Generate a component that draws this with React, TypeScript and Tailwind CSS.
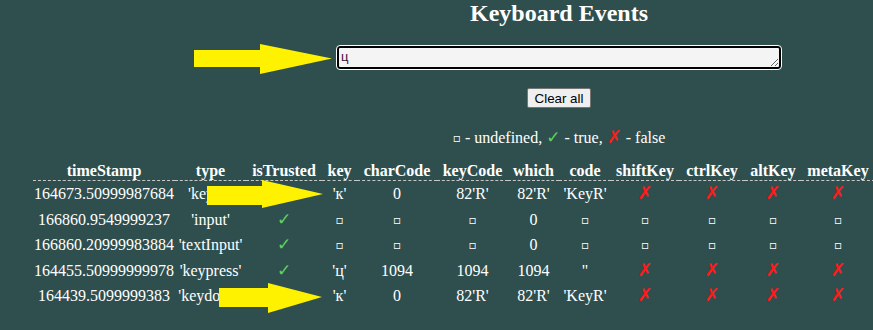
import React from 'react'

const U = () => <span className="font-['DejaVu_Sans'] text-[12px] leading-[10px] align-[1px]">▫</span>
const T = () => <span className="font-['DejaVu_Sans'] text-[17px] leading-[10px] text-[#5fd35f]">✓</span>
const F = () => <span className="font-['DejaVu_Sans'] text-[18px] leading-[10px] text-[#ff1a1a]">✗</span>

type Row = React.ReactNode[]

const rows: Row[] = [
  ['164673.50999987684', "'keyup'", <T />, "'к'", '0', "82'R'", "82'R'", "'KeyR'", <F />, <F />, <F />, <F />],
  ['166860.9549999237', "'input'", <T />, <U />, <U />, <U />, '0', <U />, <U />, <U />, <U />, <U />],
  ['166860.20999983884', "'textInput'", <T />, <U />, <U />, <U />, '0', <U />, <U />, <U />, <U />, <U />],
  ['164455.50999999978', "'keypress'", <T />, "'ц'", '1094', '1094', '1094', "''", <F />, <F />, <F />, <F />],
  ['164439.5099999383', "'keydown'", <T />, "'к'", '0', "82'R'", "82'R'", "'KeyR'", <F />, <F />, <F />, <F />],
]

const headers = ['timeStamp', 'type', 'isTrusted', 'key', 'charCode', 'keyCode', 'which', 'code', 'shiftKey', 'ctrlKey', 'altKey', 'metaKey']
const widths = [142, 71, 76, 35, 80, 71, 51, 52, 68, 66, 56, 74]

const Arrow = ({ points }: { points: string }) => (
  <polygon points={points} fill="#fff200" />
)

const App: React.FC = () => {
  return (
    <div className="relative w-[873px] h-[330px] overflow-hidden bg-[#2f4f4f] text-white font-['Liberation_Serif',serif]">
      <div className="w-[1118px] flex flex-col items-center">
        <h2 className="text-[24px] leading-[27px] font-bold">Keyboard Events</h2>
        <textarea
          defaultValue="ц"
          className="mt-[19px] w-[444px] h-[23px] resize-y rounded-[3px] border-2 border-black bg-[#f4f4f4] px-[2px] py-0 text-[13px] leading-[17px] text-[#3b0b3b] font-['Liberation_Sans',sans-serif] outline outline-1 outline-white"
        />
        <button className="mt-[19px] h-[20px] w-[64px] rounded-[2px] border border-[#767676] bg-[#efefef] text-[13.33px] text-black font-['Liberation_Sans',sans-serif]">
          Clear all
        </button>
        <p className="mt-[21px] text-[16px] leading-[18px]">
          <U /> - undefined, <T /> - true, <F /> - false
        </p>
      </div>

      <table className="mt-[13px] ml-[33px] table-fixed border-separate border-spacing-0 text-[16px]" style={{ width: 842 }}>
        <colgroup>
          {widths.map((w, i) => (
            <col key={i} style={{ width: w }} />
          ))}
        </colgroup>
        <thead>
          <tr>
            {headers.map(h => (
              <th key={h} className="pt-[2px] pb-0 leading-[18px] font-bold text-center border-b border-dashed border-[#c8c8c8] whitespace-nowrap">
                {h}
              </th>
            ))}
          </tr>
        </thead>
        <tbody>
          {rows.map((r, i) => (
            <tr key={i}>
              {r.map((c, j) => (
                <td key={j} className="py-[3.25px] leading-[19px] text-center whitespace-nowrap">
                  {c}
                </td>
              ))}
            </tr>
          ))}
        </tbody>
      </table>

      <svg className="absolute left-0 top-0 pointer-events-none" width="873" height="330">
        <Arrow points="194,50 260,50 260,44 332,58.5 260,74 260,67 194,67" />
        <Arrow points="207,186 262,186 262,180 323,194 262,208 262,205 207,205" />
        <Arrow points="219,288 268,288 268,283 322,297 268,313 268,307 219,307" />
      </svg>
    </div>
  )
}

export default App
